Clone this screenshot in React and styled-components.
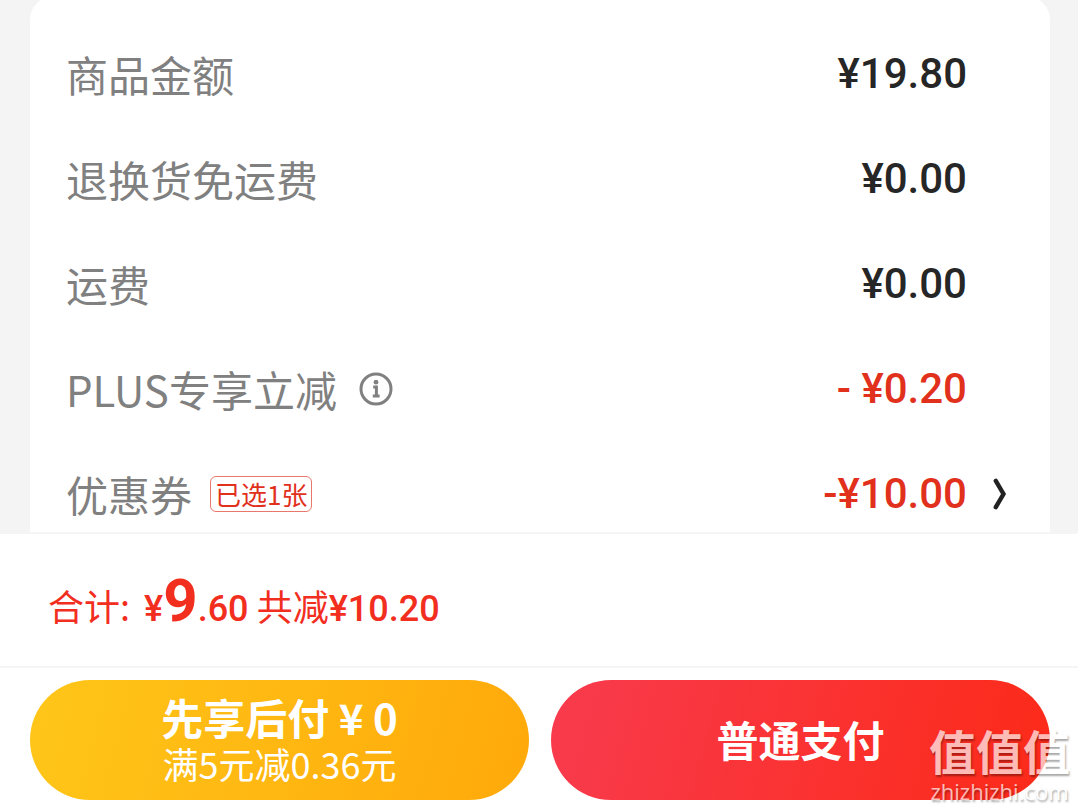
import React from "react";
import styled, { createGlobalStyle } from "styled-components";

const GlobalStyle = createGlobalStyle`
  * {
    box-sizing: border-box;
  }

  body {
    margin: 0;
    background: #f4f4f4;
    font-family: "Noto Sans CJK SC", sans-serif;
  }
`;

const Page = styled.div`
  display: flex;
  flex-direction: column;
  height: 100vh;
  overflow: hidden;
`;

const Content = styled.main`
  flex: 1;
  min-height: 0;
  overflow: hidden;
  padding: 0 28px 0 30px;
`;

const Card = styled.dl`
  margin: -4px 0 0;
  padding-top: 25px;
  background: #ffffff;
  border-radius: 24px 24px 0 0;
`;

const Row = styled.div`
  display: flex;
  align-items: center;
  height: 105px;
  padding: 0 43px 0 36px;
`;

const Label = styled.dt`
  flex: 1;
  display: flex;
  align-items: center;
  font-size: 42px;
  line-height: 60px;
  color: #808080;
`;

const Price = styled.dd`
  margin: 0;
  font-family: Roboto, "Noto Sans CJK SC", sans-serif;
  font-weight: 500;
  font-size: 42px;
  line-height: 48px;
  white-space: pre;
  color: ${({ $discount }) => ($discount ? "#e1301c" : "#262626")};
`;

const Trailing = styled.div`
  display: flex;
  justify-content: flex-end;
  width: 40px;
`;

const IconButton = styled.button`
  display: flex;
  padding: 0;
  border: 0;
  background: none;
  color: ${({ $color }) => $color};
  cursor: pointer;
`;

const InfoButton = styled(IconButton)`
  margin-left: 22px;
`;

const Badge = styled.span`
  margin-left: 18px;
  padding: 0 4px;
  border: 1px solid #e8786c;
  border-radius: 6px;
  font-size: 26px;
  line-height: 34px;
  color: #e1301c;
`;

const Footer = styled.footer`
  background: #ffffff;
  border-top: 2px solid #f5f5f5;
`;

const Total = styled.p`
  margin: 0;
  height: 132px;
  padding: 23px 48px 0;
  font-size: 36px;
  line-height: 88px;
  color: #f22e1f;
`;

const Amount = styled.span`
  font-family: Roboto, "Noto Sans CJK SC", sans-serif;
  font-weight: 500;
`;

const Payable = styled(Amount)`
  margin-left: 6px;
`;

const Big = styled.strong`
  font-size: 60px;
  font-weight: 700;
`;

const Actions = styled.div`
  display: flex;
  gap: 22px;
  padding: 12px 28px 9px 30px;
  border-top: 2px solid #f5f5f5;
`;

const PayButton = styled.button`
  flex: 1;
  display: flex;
  flex-direction: column;
  align-items: center;
  justify-content: center;
  height: 120px;
  padding: 0 0 2px;
  border: 0;
  border-radius: 60px;
  background: ${({ $from, $to }) =>
    `linear-gradient(105deg, ${$from}, ${$to})`};
  font-family: inherit;
  font-size: 36px;
  line-height: 44px;
  color: #ffffff;
  cursor: pointer;

  strong {
    font-size: 42px;
    line-height: 48px;
    font-weight: 700;
  }
`;

const Watermark = styled.div`
  position: absolute;
  right: 8px;
  bottom: 6px;
  text-align: center;
  font-weight: 700;
  font-size: 47px;
  line-height: 58px;
  color: #ffffff;
  opacity: 0.68;
  text-shadow: 1px 2px 2px rgba(0, 0, 0, 0.5);
  pointer-events: none;

  small {
    display: block;
    font-family: "Open Sans", sans-serif;
    font-weight: 500;
    font-size: 22px;
    line-height: 24px;
  }
`;

const InfoIcon = () => (
  <svg width="34" height="34" viewBox="0 0 34 34" fill="none">
    <circle cx="17" cy="17" r="15" stroke="currentColor" strokeWidth="3" />
    <circle cx="17" cy="10.2" r="2.4" fill="currentColor" />
    <path
      d="M14.2 15h3.2v9.2M13.8 24h6.8"
      stroke="currentColor"
      strokeWidth="3"
    />
  </svg>
);

const ChevronIcon = () => (
  <svg width="14" height="32" viewBox="0 0 14 32" fill="none">
    <path
      d="M2.8 2.8L10.5 16L2.8 29.2"
      stroke="currentColor"
      strokeWidth="4.4"
      strokeLinecap="round"
    />
  </svg>
);

const rows = [
  { label: "商品金额", price: "¥19.80" },
  { label: "退换货免运费", price: "¥0.00" },
  { label: "运费", price: "¥0.00" },
  { label: "PLUS专享立减", price: "- ¥0.20", discount: true, info: true },
  {
    label: "优惠券",
    price: "-¥10.00",
    discount: true,
    badge: "已选1张",
    link: true,
  },
];

const App = () => {
  return (
    <Page>
      <GlobalStyle />
      <Content>
        <Card>
          {rows.map((row) => (
            <Row key={row.label}>
              <Label>
                {row.label}
                {row.info && (
                  <InfoButton $color="#808080" aria-label="说明">
                    <InfoIcon />
                  </InfoButton>
                )}
                {row.badge && <Badge>{row.badge}</Badge>}
              </Label>
              <Price $discount={row.discount}>{row.price}</Price>
              <Trailing>
                {row.link && (
                  <IconButton $color="#222222" aria-label="选择优惠券">
                    <ChevronIcon />
                  </IconButton>
                )}
              </Trailing>
            </Row>
          ))}
        </Card>
      </Content>
      <Footer>
        <Total>
          合计:{" "}
          <Payable>
            ¥<Big>9</Big>.60
          </Payable>{" "}
          共减<Amount>¥10.20</Amount>
        </Total>
        <Actions>
          <PayButton $from="#ffc619" $to="#ffa90a">
            <strong>先享后付 ¥ 0</strong>
            <span>满5元减0.36元</span>
          </PayButton>
          <PayButton $from="#f83b4e" $to="#fc2a18">
            <strong>普通支付</strong>
          </PayButton>
        </Actions>
      </Footer>
      <Watermark>
        值值值
        <small>zhizhizhi.com</small>
      </Watermark>
    </Page>
  );
};

export default App;
